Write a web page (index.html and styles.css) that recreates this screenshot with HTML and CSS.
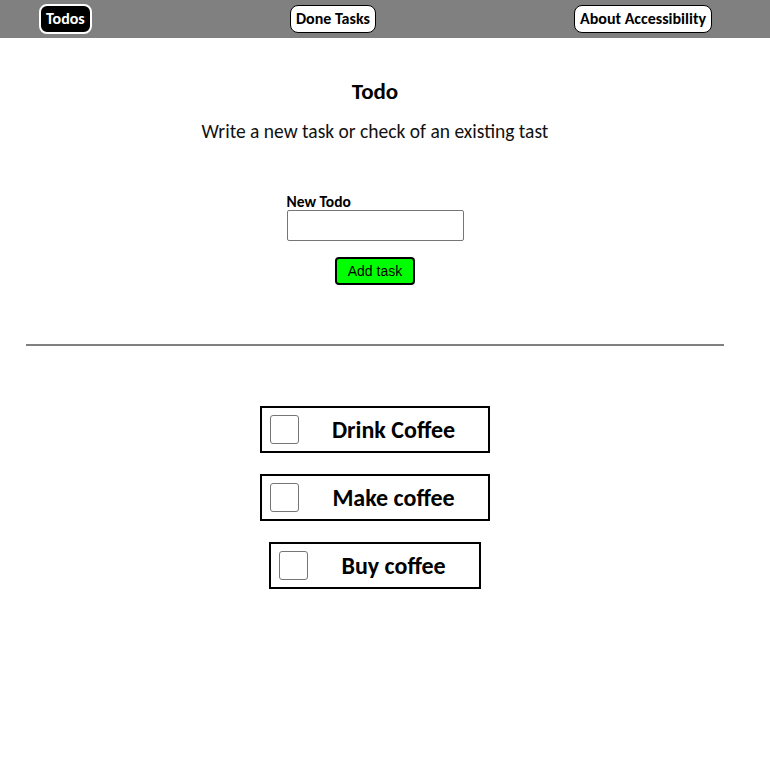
FILE: index.html
```html
<!DOCTYPE html>
<html lang="en">
<head>
<meta charset="utf-8">
<title>Todo</title>
<link rel="stylesheet" href="styles.css">
</head>
<body>
<nav class="nav">
  <a class="nav-btn active" href="#">Todos</a>
  <a class="nav-btn" href="#">Done Tasks</a>
  <a class="nav-btn" href="#">About Accessibility</a>
</nav>
<main class="main">
  <h1 class="title">Todo</h1>
  <p class="subtitle">Write a new task or check of an existing tast</p>
  <form class="form">
    <div class="field">
      <label class="label" for="todo">New Todo</label>
      <input class="input" id="todo" type="text">
    </div>
    <button class="add-btn" type="button">Add task</button>
  </form>
  <hr class="divider">
  <ul class="list">
    <li class="item"><input class="check" type="checkbox"><span class="item-text">Drink Coffee</span></li>
    <li class="item"><input class="check" type="checkbox"><span class="item-text">Make coffee</span></li>
    <li class="item"><input class="check" type="checkbox"><span class="item-text">Buy coffee</span></li>
  </ul>
</main>
</body>
</html>
```

FILE: styles.css
```css
body {
  margin: 0;
  font-family: "Carlito", "Lato", sans-serif;
  color: #000;
  background: #fff;
}
.nav {
  height: 38px;
  background: #808080;
  display: flex;
  align-items: center;
  justify-content: space-between;
  padding: 0 58px 0 39px;
  box-sizing: border-box;
}
.nav-btn {
  display: inline-flex;
  align-items: center;
  height: 28px;
  box-sizing: border-box;
  padding: 0 5px 1px;
  border: 1px solid #000;
  border-radius: 8px;
  background: #fff;
  color: #000;
  font-weight: 700;
  font-size: 16px;
  text-decoration: none;
}
.nav-btn.active {
  height: 30px;
  background: #000;
  color: #fff;
  border: 2px solid #fff;
}
.main {
  width: 750px;
  display: flex;
  flex-direction: column;
  align-items: center;
}
.title {
  margin: 40px 0 0;
  font-size: 23px;
  line-height: 26px;
  font-weight: 700;
}
.subtitle {
  margin: 15px 0 0;
  font-size: 19.5px;
  line-height: 24px;
  font-weight: 300;
  color: #111;
}
.form {
  margin-top: 51px;
  display: flex;
  flex-direction: column;
  align-items: center;
}
.field {
  display: flex;
  flex-direction: column;
}
.label {
  font-size: 15.5px;
  line-height: 16px;
  font-weight: 700;
}
.input {
  width: 177px;
  height: 31px;
  box-sizing: border-box;
  margin: 0;
  border: 1px solid #767676;
  border-radius: 2px;
}
.add-btn {
  margin-top: 16px;
  width: 80px;
  height: 28px;
  background: #00ff00;
  border: 2px solid #000;
  border-radius: 4px;
  font-family: "Liberation Sans", Arial, sans-serif;
  font-size: 14px;
  color: #000;
  padding: 0;
}
.divider {
  width: 698px;
  margin: 59px 0 0;
  border: 0;
  border-top: 2px solid #808080;
}
.list {
  list-style: none;
  margin: 60px 0 0;
  padding: 0;
  display: flex;
  flex-direction: column;
  align-items: center;
  gap: 21px;
}
.item {
  display: flex;
  align-items: center;
  height: 47px;
  box-sizing: border-box;
  border: 2px solid #000;
  padding: 0 33px 0 8px;
}
.check {
  appearance: none;
  -webkit-appearance: none;
  flex: none;
  width: 29px;
  height: 29px;
  margin: 0 33px 0 0;
  border: 1px solid #767676;
  border-radius: 3px;
  background: #fff;
}
.item-text {
  font-size: 24px;
  font-weight: 700;
  line-height: 29px;
}
```
